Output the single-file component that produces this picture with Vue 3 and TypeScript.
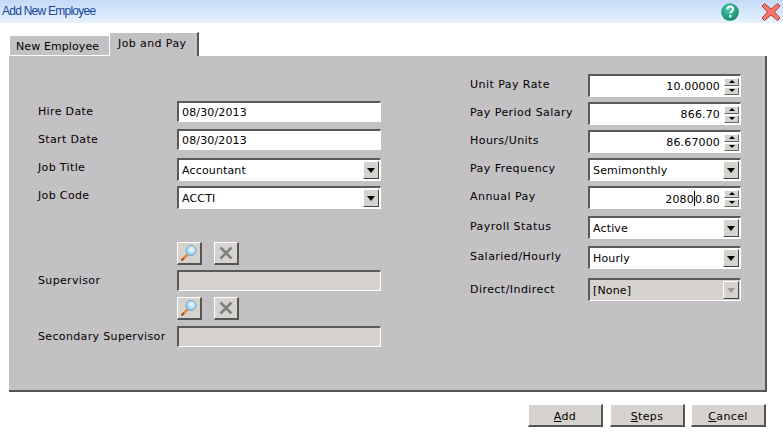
<script setup lang="ts">
interface Field {
  label: string
  value: string
  kind: 'spin' | 'select' | 'disabled'
  gap: number
  caret?: boolean
}

const rightFields: Field[] = [
  { label: 'Unit Pay Rate', value: '10.00000', kind: 'spin', gap: 0 },
  { label: 'Pay Period Salary', value: '866.70', kind: 'spin', gap: 5 },
  { label: 'Hours/Units', value: '86.67000', kind: 'spin', gap: 5 },
  { label: 'Pay Frequency', value: 'Semimonthly', kind: 'select', gap: 5 },
  { label: 'Annual Pay', value: '20800.80', kind: 'spin', gap: 5, caret: true },
  { label: 'Payroll Status', value: 'Active', kind: 'select', gap: 7 },
  { label: 'Salaried/Hourly', value: 'Hourly', kind: 'select', gap: 7 },
  { label: 'Direct/Indirect', value: '[None]', kind: 'disabled', gap: 9 },
]
const supervisors = ['Supervisor', 'Secondary Supervisor']
</script>

<template>
  <div class="window">
    <header class="titlebar">
      <span class="title">Add New Employee</span>
      <div class="title-icons">
        <svg class="help" width="20" height="20" viewBox="0 0 20 20">
          <defs>
            <radialGradient id="hg" cx="45%" cy="35%" r="70%">
              <stop offset="0" stop-color="#4fd0a8" />
              <stop offset="1" stop-color="#0b8268" />
            </radialGradient>
          </defs>
          <circle cx="10" cy="10" r="8.8" fill="url(#hg)" />
          <path d="M7.2 7.4c.2-1.9 1.5-2.8 3-2.8 1.700 0 2.900 1 2.900 2.500 0 1.300-.8 1.900-1.600 2.500-.7.500-1.100.9-1.100 1.900" fill="none" stroke="#fff" stroke-width="2" />
          <rect x="9.200" y="13" width="2.200" height="2.400" fill="#fff" />
        </svg>
        <svg class="close" width="20" height="20" viewBox="0 0 20 20">
          <path d="M3.500 1.500 10 7l6.500-5.500 2.500 2.500L13.500 10l5.500 6-2.500 2.500L10 13l-6.500 5.500L1 16l5.500-6L1 4z" fill="#f4766c" stroke="#b53c34" stroke-width="1" stroke-linejoin="round" />
        </svg>
      </div>
    </header>

    <div class="tabs">
      <div class="tab">New Employee</div>
      <div class="tab active">Job and Pay</div>
    </div>

    <section class="panel">
      <div class="col-left">
        <div class="row">
          <label>Hire Date</label>
          <div class="field plain"><span class="txt">08/30/2013</span></div>
        </div>
        <div class="row after-plain">
          <label>Start Date</label>
          <div class="field plain"><span class="txt">08/30/2013</span></div>
        </div>
        <div class="row after-start">
          <label class="raised">Job Title</label>
          <div class="field">
            <span class="txt">Accountant</span>
            <span class="drop"><i class="arrow"></i></span>
          </div>
        </div>
        <div class="row after-title">
          <label class="raised">Job Code</label>
          <div class="field">
            <span class="txt">ACCTI</span>
            <span class="drop"><i class="arrow"></i></span>
          </div>
        </div>

        <div v-for="(s, i) in supervisors" :key="s" class="sup" :class="{ first: i === 0 }">
          <div class="tools">
            <button class="tool" type="button" aria-label="Search">
              <svg width="20" height="20" viewBox="0 0 20 20">
                <defs>
                  <radialGradient :id="'lens' + i" cx="55%" cy="40%" r="60%">
                    <stop offset="0" stop-color="#f2fbff" />
                    <stop offset="1" stop-color="#86c8f2" />
                  </radialGradient>
                </defs>
                <path d="M9 11 3.500 16.500" stroke="#e2872c" stroke-width="2.400" stroke-linecap="round" />
                <path d="M4.500 15.500 3 17" stroke="#a8551a" stroke-width="2" stroke-linecap="round" />
                <circle cx="12" cy="7.500" r="5" :fill="'url(#lens' + i + ')'" stroke="#7ba6c8" stroke-width="1" />
              </svg>
            </button>
            <button class="tool" type="button" aria-label="Clear">
              <svg width="16" height="16" viewBox="0 0 16 16">
                <path d="M2.500 2.500l11 11M13.500 2.500l-11 11" stroke="#808080" stroke-width="2.600" />
              </svg>
            </button>
          </div>
          <div class="row">
            <label>{{ s }}</label>
            <div class="field plain off"></div>
          </div>
        </div>
      </div>

      <div class="col-right">
        <div v-for="f in rightFields" :key="f.label" class="rrow" :class="{ last: f.kind === 'disabled' }" :style="{ marginTop: f.gap + 'px' }">
          <label>{{ f.label }}</label>
          <div class="field" :class="{ off: f.kind === 'disabled' }">
            <span v-if="f.kind === 'spin'" class="txt num">
              <template v-if="f.caret">2080<i class="caret"></i>0.80</template>
              <template v-else>{{ f.value }}</template>
            </span>
            <span v-else class="txt">{{ f.value }}</span>
            <span v-if="f.kind === 'spin'" class="spin">
              <span class="spin-b"><i class="up"></i></span>
              <span class="spin-b"><i class="down"></i></span>
            </span>
            <span v-else class="drop" :class="{ dim: f.kind === 'disabled' }"><i class="arrow"></i></span>
          </div>
        </div>
      </div>
    </section>

    <footer class="actions">
      <button class="btn" type="button"><u>A</u>dd</button>
      <button class="btn second" type="button"><u>S</u>teps</button>
      <button class="btn" type="button"><u>C</u>ancel</button>
    </footer>
  </div>
</template>

<style scoped>
.window {
  width: 783px;
  height: 438px;
  overflow: hidden;
  background: #fff;
  font-family: "DejaVu Sans", Verdana, sans-serif;
  font-size: 11px;
  color: #000;
}
.titlebar {
  height: 23px;
  display: flex;
  align-items: center;
  justify-content: space-between;
  background: linear-gradient(#c3dbf8, #e8f2fd);
}
.title {
  margin-left: 2px;
  margin-bottom: 2px;
  font-family: "Liberation Sans", Arial, sans-serif;
  font-size: 12px;
  letter-spacing: -0.75px;
  color: #16459a;
}
.title-icons {
  display: flex;
  gap: 21px;
  margin-right: 2px;
  align-items: center;
}
.tabs {
  display: flex;
  align-items: flex-end;
  height: 33px;
  margin-left: 9px;
}
.tab {
  width: 100px;
  height: 21px;
  box-sizing: border-box;
  padding: 4px 0 0 6px;
  background: #c4c1c4;
  border-top: 1px solid #fff;
  border-left: 1px solid #fff;
  border-bottom: 1px solid #fff;
  letter-spacing: 0.1px;
}
.tab.active {
  width: 90px;
  height: 24px;
  padding: 4px 0 0 8px;
  border-bottom: 0;
  border-right: 2px solid #555;
  letter-spacing: 0.4px;
}
.panel {
  margin-left: 9px;
  width: 758px;
  height: 336px;
  box-sizing: border-box;
  display: flex;
  justify-content: space-between;
  background: #c4c1c4;
  border-right: 2px solid #555;
  border-bottom: 2px solid #555;
}
.col-left {
  width: 372px;
  padding: 45px 0 0 29px;
  box-sizing: border-box;
}
.col-right {
  width: 295px;
  padding: 18px 24px 0 0;
  box-sizing: border-box;
}
.row {
  display: flex;
  align-items: flex-start;
}
.row label {
  width: 139px;
  margin-top: 4px;
  flex: none;
  letter-spacing: 0.35px;
}
.row label.raised { margin-top: 3px; }
.row .field { width: 204px; }
.row.after-plain { margin-top: 7px; }
.row.after-start { margin-top: 8px; }
.row.after-title { margin-top: 5px; }
.rrow {
  display: flex;
  align-items: flex-start;
}
.rrow label {
  width: 118px;
  margin-top: 4px;
  flex: none;
  letter-spacing: 0.45px;
}
.rrow.last label { margin-top: 5px; }
.rrow .field { width: 153px; }
.field {
  height: 23px;
  box-sizing: border-box;
  display: flex;
  align-items: center;
  background: #fff;
  border-style: solid;
  border-width: 2px 1px 1px 2px;
  border-color: #5a5a5a #fff #fff #5a5a5a;
}
.field.plain { height: 21px; }
.field.off { background: #d6d3ce; }
.txt {
  flex: 1;
  padding-left: 3px;
  padding-top: 1px;
  white-space: nowrap;
  letter-spacing: 0.15px;
}
.num {
  text-align: right;
  padding-right: 4px;
}
.caret {
  display: inline-block;
  width: 1px;
  height: 15px;
  margin: 0 0 -3px;
  background: #000;
}
.drop {
  width: 16px;
  height: 18px;
  margin-right: 1px;
  flex: none;
  box-sizing: border-box;
  display: flex;
  align-items: center;
  justify-content: center;
  background: #d6d3ce;
  border-style: solid;
  border-width: 1px;
  border-color: #fff #444 #444 #fff;
}
.arrow {
  width: 0;
  height: 0;
  border-left: 4px solid transparent;
  border-right: 4px solid transparent;
  border-top: 5px solid #000;
}
.drop.dim .arrow { border-top-color: #9a9a9a; }
.spin {
  width: 15px;
  margin-right: 1px;
  flex: none;
  display: flex;
  flex-direction: column;
  gap: 1px;
}
.spin-b {
  height: 8px;
  box-sizing: border-box;
  display: flex;
  align-items: center;
  justify-content: center;
  background: #d6d3ce;
  border-style: solid;
  border-width: 1px;
  border-color: #fff #666 #666 #fff;
}
.up, .down {
  width: 0;
  height: 0;
  border-left: 3px solid transparent;
  border-right: 3px solid transparent;
}
.up { border-bottom: 3px solid #000; }
.down { border-top: 3px solid #000; }
.sup { margin-top: 6px; }
.sup.first { margin-top: 33px; }
.tools {
  display: flex;
  gap: 12px;
  margin-left: 139px;
  margin-bottom: 6px;
}
.sup.first .tools { margin-bottom: 5px; }
.tool {
  width: 25px;
  height: 23px;
  padding: 0;
  box-sizing: border-box;
  display: flex;
  align-items: center;
  justify-content: center;
  background: #d6d3ce;
  border-style: solid;
  border-width: 1px 2px 2px 1px;
  border-color: #fff #555 #555 #fff;
}
.sup .row label { margin-top: 4px; }
.actions {
  display: flex;
  justify-content: flex-end;
  gap: 6px;
  margin-top: 12px;
  margin-right: 17px;
}
.btn {
  width: 75px;
  height: 23px;
  padding: 2px 0 0;
  box-sizing: border-box;
  background: #d6d3ce;
  border-style: solid;
  border-width: 1px 2px 2px 1px;
  border-color: #fff #555 #555 #fff;
  font-family: inherit;
  font-size: 11px;
  letter-spacing: 0.35px;
  color: #000;
}
.btn.second { margin-left: 1px; }
</style>

<style>
html, body { margin: 0; background: #fff; }
</style>
